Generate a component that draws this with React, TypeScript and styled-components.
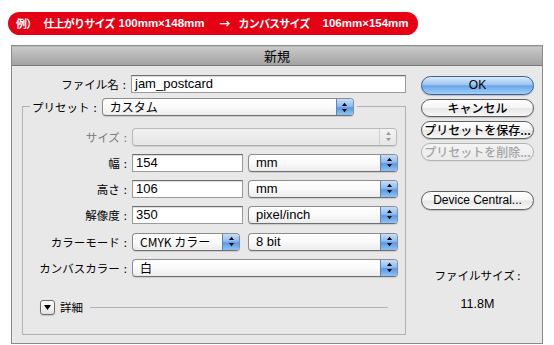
import React from "react";
import styled, { createGlobalStyle, css } from "styled-components";

const GlobalStyle = createGlobalStyle`
  html, body { margin: 0; padding: 0; background: #ffffff; }
  body { font-family: "Noto Sans CJK JP", "Noto Sans", sans-serif; color: #000; }
`;

const JP = `"Noto Sans CJK JP", "Noto Sans", sans-serif`;
const LATIN = `"Liberation Sans", "Noto Sans CJK JP", sans-serif`;

const Page = styled.div`
  padding: 9px 0 0 8px;
`;

const Banner = styled.div`
  display: inline-flex;
  align-items: center;
  height: 23px;
  border-radius: 12px;
  background: #e50014;
  color: #fff;
  font-family: ${JP};
  font-weight: 700;
  font-size: 11px;
  padding: 0 9px 0 8px;
  white-space: nowrap;
`;

const BannerPart = styled.span<{ $ml?: number; $tight?: boolean; $latin?: boolean }>`
  margin-left: ${(p) => p.$ml ?? 0}px;
  letter-spacing: ${(p) => (p.$tight ? "-0.8px" : "0")};
  ${(p) =>
    p.$latin
      ? css`
          font-family: ${LATIN};
          font-size: 11.5px;
        `
      : ""}
`;

const Dialog = styled.div`
  margin: 10px 0 0 3px;
  width: 530px;
  border: 1px solid #8a8a8a;
  background: #e8e8e8;
`;

const TitleBar = styled.div`
  height: 18px;
  border-top: 1px solid #b9b9b9;
  border-bottom: 1px solid #7a7a7a;
  background: linear-gradient(#c9c9c9, #a3a3a3);
  display: flex;
  align-items: center;
  justify-content: center;
  font-family: ${JP};
  font-size: 13px;
`;

const Body = styled.div`
  display: flex;
  gap: 15px;
  padding: 9px 8px 8px 10px;
`;

const LeftCol = styled.div`
  width: 384px;
  display: flex;
  flex-direction: column;
`;

const Row = styled.div<{ $mt?: number }>`
  display: flex;
  align-items: center;
  height: 18px;
  margin-top: ${(p) => p.$mt ?? 0}px;
`;

const Label = styled.div<{ $w?: number; $dim?: boolean }>`
  ${(p) => (p.$w ? css`width: ${p.$w}px;` : "")}
  flex: none;
  text-align: right;
  font-family: ${JP};
  font-size: 11.5px;
  color: ${(p) => (p.$dim ? "#7a7a7a" : "#000")};
  white-space: nowrap;
`;

const Colon = styled.span`
  margin: 0 5px 0 4px;
`;

const TextInput = styled.div<{ $w: number }>`
  width: ${(p) => p.$w}px;
  height: 18px;
  box-sizing: border-box;
  background: #fff;
  border: 1px solid #9a9a9a;
  border-top-color: #6e6e6e;
  box-shadow: inset 0 1px 1px rgba(0, 0, 0, 0.15);
  font-family: ${LATIN};
  font-size: 13px;
  line-height: 16px;
  padding-left: 3px;
`;

const SelectBox = styled.div<{ $w: number; $ml?: number; $disabled?: boolean }>`
  width: ${(p) => p.$w}px;
  height: 18px;
  margin-left: ${(p) => p.$ml ?? 0}px;
  box-sizing: border-box;
  display: flex;
  border: 1px solid ${(p) => (p.$disabled ? "#b9b9b9" : "#8d8d8d")};
  border-bottom-color: ${(p) => (p.$disabled ? "#b0b0b0" : "#6f6f6f")};
  border-radius: 4px;
  overflow: hidden;
  background: ${(p) =>
    p.$disabled
      ? "linear-gradient(#f1f1f1, #e6e6e6)"
      : "linear-gradient(#ffffff 0%, #fafafa 50%, #ececec 100%)"};
  box-shadow: 0 1px 1px rgba(0, 0, 0, 0.12);
`;

const SelectText = styled.div<{ $latin?: boolean }>`
  flex: 1;
  padding-left: 7px;
  font-family: ${(p) => (p.$latin ? LATIN : JP)};
  font-size: ${(p) => (p.$latin ? "13px" : "12px")};
  line-height: 16px;
  white-space: nowrap;
`;

const Stepper = styled.div<{ $disabled?: boolean }>`
  width: 16px;
  flex: none;
  display: flex;
  align-items: center;
  justify-content: center;
  border-left: 1px solid ${(p) => (p.$disabled ? "#cfcfcf" : "#5a84c0")};
  background: ${(p) =>
    p.$disabled
      ? "linear-gradient(#f3f3f3, #e6e6e6)"
      : "linear-gradient(#c6def8 0%, #8dbbf0 45%, #5c98e2 55%, #8cc4f6 100%)"};
`;

const Arrows = ({ color }: { color: string }) => (
  <svg width="7" height="11" viewBox="0 0 7 11">
    <path d="M3.5 0.8 L6 4 L1 4 Z" fill={color} />
    <path d="M3.5 10.2 L6 7 L1 7 Z" fill={color} />
  </svg>
);

const Select = ({
  w,
  ml,
  text,
  latin,
  disabled,
}: {
  w: number;
  ml?: number;
  text?: string;
  latin?: boolean;
  disabled?: boolean;
}) => (
  <SelectBox $w={w} $ml={ml} $disabled={disabled}>
    <SelectText $latin={latin}>{text}</SelectText>
    <Stepper $disabled={disabled}>
      <Arrows color={disabled ? "#9a9a9a" : "#000"} />
    </Stepper>
  </SelectBox>
);

const Group = styled.div`
  margin-top: 13px;
  border: 1px solid #b1b1b1;
  display: flex;
  flex-direction: column;
  padding-bottom: 19px;
`;

const Legend = styled.div`
  align-self: flex-start;
  display: flex;
  align-items: center;
  height: 17px;
  margin: -8px 0 0 7px;
  padding: 0 3px 0 2px;
  background: #e8e8e8;
`;

const Rows = styled.div`
  display: flex;
  flex-direction: column;
  gap: 8px;
  margin-top: 12px;
`;

const DetailRow = styled.div`
  display: flex;
  align-items: center;
  height: 15px;
  margin-top: 23px;
  padding: 0 17px 0 17px;
`;

const Disclosure = styled.div`
  width: 15px;
  height: 15px;
  box-sizing: border-box;
  border: 1px solid #6a6a6a;
  border-radius: 3px;
  background: linear-gradient(#ffffff, #e2e2e2);
  display: flex;
  align-items: center;
  justify-content: center;
  box-shadow: 0 1px 1px rgba(0, 0, 0, 0.15);
`;

const DetailText = styled.span`
  margin-left: 5px;
  font-family: ${JP};
  font-size: 11.5px;
`;

const Rule = styled.div`
  flex: 1;
  height: 1px;
  margin-left: 7px;
  background: #b3b3b3;
`;

const RightCol = styled.div`
  width: 113px;
  display: flex;
  flex-direction: column;
  gap: 4px;
  padding-top: 1px;
  align-items: stretch;
`;

const Button = styled.div<{ $primary?: boolean; $disabled?: boolean; $mt?: number; $h?: number }>`
  height: ${(p) => p.$h ?? 18}px;
  margin-top: ${(p) => p.$mt ?? 0}px;
  box-sizing: border-box;
  border-radius: 10px;
  display: flex;
  align-items: center;
  justify-content: center;
  font-family: ${JP};
  font-size: 12px;
  font-weight: 500;
  white-space: nowrap;
  color: ${(p) => (p.$disabled ? "#a3a3a3" : "#000")};
  border: 1px solid ${(p) => (p.$primary ? "#3e5f92" : p.$disabled ? "#b3b3b3" : "#5f5f5f")};
  background: ${(p) =>
    p.$primary
      ? "linear-gradient(#d9e9fa 0%, #9cc6f1 45%, #6aa5e8 52%, #9fd0fa 100%)"
      : p.$disabled
      ? "linear-gradient(#f4f4f4, #ebebeb)"
      : "linear-gradient(#ffffff 0%, #f6f6f6 48%, #e6e6e6 52%, #f7f7f7 100%)"};
  box-shadow: 0 1px 1px rgba(0, 0, 0, ${(p) => (p.$disabled ? 0.05 : 0.18)});
`;

const LatinText = styled.span`
  font-family: ${LATIN};
  font-weight: 400;
`;

const Info = styled.div<{ $mt: number; $latin?: boolean }>`
  margin-top: ${(p) => p.$mt}px;
  text-align: center;
  font-family: ${(p) => (p.$latin ? LATIN : JP)};
  font-size: ${(p) => (p.$latin ? "12.5px" : "11.5px")};
  line-height: 16px;
`;

export default function App() {
  return (
    <>
      <GlobalStyle />
      <Page>
        <Banner>
          <BannerPart $tight>例）</BannerPart>
          <BannerPart $ml={7} $tight>仕上がりサイズ</BannerPart>
          <BannerPart $ml={4} $latin>100mm×148mm</BannerPart>
          <BannerPart $ml={15}>→</BannerPart>
          <BannerPart $ml={8} $tight>カンバスサイズ</BannerPart>
          <BannerPart $ml={13} $latin>106mm×154mm</BannerPart>
        </Banner>
        <Dialog>
          <TitleBar>新規</TitleBar>
          <Body>
            <LeftCol>
              <Row>
                <Label $w={109}>
                  ファイル名<Colon>:</Colon>
                </Label>
                <TextInput $w={276}>jam_postcard</TextInput>
              </Row>
              <Group>
                <Legend>
                  <Label>
                    プリセット<Colon>:</Colon>
                  </Label>
                  <Select w={252} text="カスタム" />
                </Legend>
                <Rows>
                  <Row>
                    <Label $w={109} $dim>
                      サイズ<Colon>:</Colon>
                    </Label>
                    <Select w={265} disabled />
                  </Row>
                  <Row>
                    <Label $w={109}>
                      幅<Colon>:</Colon>
                    </Label>
                    <TextInput $w={111}>154</TextInput>
                    <Select w={150} ml={5} text="mm" latin />
                  </Row>
                  <Row>
                    <Label $w={109}>
                      高さ<Colon>:</Colon>
                    </Label>
                    <TextInput $w={111}>106</TextInput>
                    <Select w={150} ml={5} text="mm" latin />
                  </Row>
                  <Row>
                    <Label $w={109}>
                      解像度<Colon>:</Colon>
                    </Label>
                    <TextInput $w={111}>350</TextInput>
                    <Select w={150} ml={5} text="pixel/inch" latin />
                  </Row>
                  <Row $mt={1}>
                    <Label $w={109}>
                      カラーモード<Colon>:</Colon>
                    </Label>
                    <Select w={108} text="CMYK カラー" />
                    <Select w={150} ml={8} text="8 bit" latin />
                  </Row>
                  <Row>
                    <Label $w={109}>
                      カンバスカラー<Colon>:</Colon>
                    </Label>
                    <Select w={266} text="白" />
                  </Row>
                </Rows>
                <DetailRow>
                  <Disclosure>
                    <svg width="7" height="5" viewBox="0 0 7 5">
                      <path d="M0 0 L7 0 L3.5 5 Z" fill="#000" />
                    </svg>
                  </Disclosure>
                  <DetailText>詳細</DetailText>
                  <Rule />
                </DetailRow>
              </Group>
            </LeftCol>
            <RightCol>
              <Button $primary $h={19}>
                <LatinText>OK</LatinText>
              </Button>
              <Button>キャンセル</Button>
              <Button>プリセットを保存...</Button>
              <Button $disabled>プリセットを削除...</Button>
              <Button $mt={26} $h={19}>
                <LatinText>Device Central...</LatinText>
              </Button>
              <Info $mt={53}>ファイルサイズ :</Info>
              <Info $mt={9} $latin>
                11.8M
              </Info>
            </RightCol>
          </Body>
        </Dialog>
      </Page>
    </>
  );
}
